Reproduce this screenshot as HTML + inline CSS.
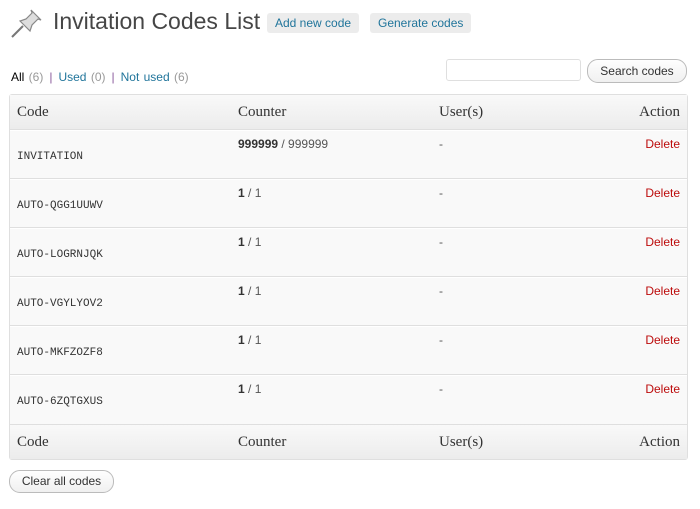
<!DOCTYPE html>
<html><head><style>
body{margin:0;background:#fff;font-family:"Liberation Sans",sans-serif;font-size:12px;color:#333;width:700px;height:509px;position:relative;overflow:hidden}
.abs{position:absolute}
h2{position:absolute;left:53px;top:8px;margin:0;font-weight:normal;font-size:23px;color:#464646;font-family:"Liberation Sans",sans-serif}
.btn{position:absolute;background:#ececec;border-radius:3px;color:#21759b;font-size:12px;line-height:20px;padding:0 8px;top:13px}
.sub{position:absolute;left:11px;top:70px;font-size:12px;color:#999;word-spacing:1px}
.sub a{color:#21759b;text-decoration:none}
.sub b{color:#000;font-weight:normal}
.sep{color:#8a5a9c;margin:0 6px}
input{position:absolute;left:446px;top:59px;width:135px;height:22px;border:1px solid #dfdfdf;border-radius:3px;box-sizing:border-box;background:#fff;padding:0}
.gb{position:absolute;border:1px solid #bbb;border-radius:11px;background:linear-gradient(#fefefe,#f0f0f0);color:#333;font-size:12px;text-align:center;box-sizing:border-box}
table{position:absolute;left:9px;top:94px;width:679px;table-layout:fixed;border-collapse:separate;border-spacing:0;border:1px solid #dfdfdf;border-radius:3px}
th{font-family:"Liberation Serif",serif;font-weight:normal;font-size:15px;color:#333;text-align:left;height:34px;padding:0 7px;background:linear-gradient(#f9f9f9,#ececec)}
thead th{border-bottom:1px solid #dfdfdf}
tfoot th{border-top:1px solid #dfdfdf}
td{height:49px;vertical-align:top;padding:6px 7px 0;box-sizing:border-box;background:#f9f9f9;border-top:1px solid #fff;border-bottom:1px solid #dfdfdf;font-size:12px;color:#555}
tbody tr:last-child td{border-bottom:none}
td.c{font-family:"Liberation Mono",monospace;font-size:11px;color:#333;padding-top:20px}
td b{color:#333}
.r{text-align:right}
td.r{color:#bc0b0b}
</style></head><body>
<svg class="abs" style="left:10px;top:7px" width="34" height="32" viewBox="0 0 34 32">
<path d="M2 30 L13 19" stroke="#777" stroke-width="2"/>
<path d="M10 14 L20 24 L22 18 L28 12 L31 13 L21 3 L22 6 L16 12 Z" fill="#ddd" stroke="#888" stroke-width="1.2"/>
</svg>
<h2>Invitation Codes List</h2>
<span class="btn" style="left:267px">Add new code</span>
<span class="btn" style="left:370px">Generate codes</span>
<div class="sub"><b>All</b> (6)<span class="sep">|</span><a>Used</a> (0)<span class="sep">|</span><a>Not used</a> (6)</div>
<input>
<div class="gb" style="left:587px;top:59px;width:100px;height:24px;line-height:22px">Search codes</div>
<table>
<colgroup><col style="width:221px"><col style="width:201px"><col style="width:160px"><col></colgroup>
<thead><tr><th>Code</th><th>Counter</th><th>User(s)</th><th class="r">Action</th></tr></thead>
<tbody>
<tr><td class="c">INVITATION</td><td><b>999999</b> / 999999</td><td>-</td><td class="r">Delete</td></tr>
<tr><td class="c">AUTO-QGG1UUWV</td><td><b>1</b> / 1</td><td>-</td><td class="r">Delete</td></tr>
<tr><td class="c">AUTO-LOGRNJQK</td><td><b>1</b> / 1</td><td>-</td><td class="r">Delete</td></tr>
<tr><td class="c">AUTO-VGYLYOV2</td><td><b>1</b> / 1</td><td>-</td><td class="r">Delete</td></tr>
<tr><td class="c">AUTO-MKFZOZF8</td><td><b>1</b> / 1</td><td>-</td><td class="r">Delete</td></tr>
<tr><td class="c">AUTO-6ZQTGXUS</td><td><b>1</b> / 1</td><td>-</td><td class="r">Delete</td></tr>
</tbody>
<tfoot><tr><th>Code</th><th>Counter</th><th>User(s)</th><th class="r">Action</th></tr></tfoot>
</table>
<div class="gb" style="left:9px;top:470px;width:105px;height:23px;line-height:21px">Clear all codes</div>
</body></html>
